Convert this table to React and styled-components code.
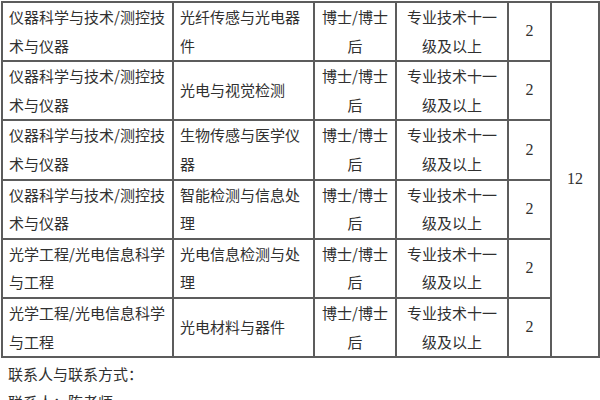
import React from 'react';
import styled, { createGlobalStyle } from 'styled-components';

const GlobalStyle = createGlobalStyle`
    html, body {
        margin: 0;
        padding: 0;
        background: #fff;
    }
    body {
        font-family: "Noto Sans CJK SC", "Noto Sans", sans-serif;
        color: #333;
    }
`;

const PageBlock = styled.div`
    width: 600px;
    height: 400px;
    overflow: hidden;
    padding: 1px 0 0 1px;
    box-sizing: border-box;
`;

const Table = styled.table`
    width: 597px;
    table-layout: fixed;
    border-collapse: collapse;
    font-size: 15px;
    line-height: 28.6px;
    color: #303030;
`;

const Col = styled.col`
    width: ${(p) => p.$w}px;
`;

const Cell = styled.td`
    border: 2px solid #5c5c5c;
    height: 57px;
    padding: 0 0 0 ${(p) => (p.$align === 'left' ? '6px' : '0')};
    vertical-align: middle;
    text-align: ${(p) => (p.$align === 'left' ? 'left' : 'center')};
    font-family: ${(p) =>
        p.$num
            ? '"Liberation Serif", "Noto Sans CJK SC", serif'
            : '"Noto Sans CJK SC", sans-serif'};
    font-size: ${(p) => (p.$num ? '16px' : '15px')};
`;

const Contact = styled.div`
    padding: 2px 0 0 7px;
    font-size: 15px;
    line-height: 28px;
    color: #303030;
`;

const colWidths = [171, 141, 82, 112, 43, 48];

const rows = [
    {
        major: ['仪器科学与技术/测控技', '术与仪器'],
        field: ['光纤传感与光电器', '件'],
    },
    {
        major: ['仪器科学与技术/测控技', '术与仪器'],
        field: ['光电与视觉检测'],
    },
    {
        major: ['仪器科学与技术/测控技', '术与仪器'],
        field: ['生物传感与医学仪', '器'],
    },
    {
        major: ['仪器科学与技术/测控技', '术与仪器'],
        field: ['智能检测与信息处', '理'],
    },
    {
        major: ['光学工程/光电信息科学', '与工程'],
        field: ['光电信息检测与处', '理'],
    },
    {
        major: ['光学工程/光电信息科学', '与工程'],
        field: ['光电材料与器件'],
    },
];

const Lines = ({ lines }) =>
    lines.map((line, i) => (
        <React.Fragment key={i}>
            {i > 0 && <br />}
            {line}
        </React.Fragment>
    ));

const App = () => {
    return (
        <PageBlock>
            <GlobalStyle />
            <Table>
                <colgroup>
                    {colWidths.map((w, i) => (
                        <Col key={i} $w={w} />
                    ))}
                </colgroup>
                <tbody>
                    {rows.map((row, i) => (
                        <tr key={i}>
                            <Cell $align="left">
                                <Lines lines={row.major} />
                            </Cell>
                            <Cell $align="left">
                                <Lines lines={row.field} />
                            </Cell>
                            <Cell>
                                <Lines lines={['博士/博士', '后']} />
                            </Cell>
                            <Cell>
                                <Lines lines={['专业技术十一', '级及以上']} />
                            </Cell>
                            <Cell $num>2</Cell>
                            {i === 0 && (
                                <Cell $num rowSpan={rows.length}>
                                    12
                                </Cell>
                            )}
                        </tr>
                    ))}
                </tbody>
            </Table>
            <Contact>
                联系人与联系方式：
                <br />
                联系人：陈老师
            </Contact>
        </PageBlock>
    );
};

export default App;
